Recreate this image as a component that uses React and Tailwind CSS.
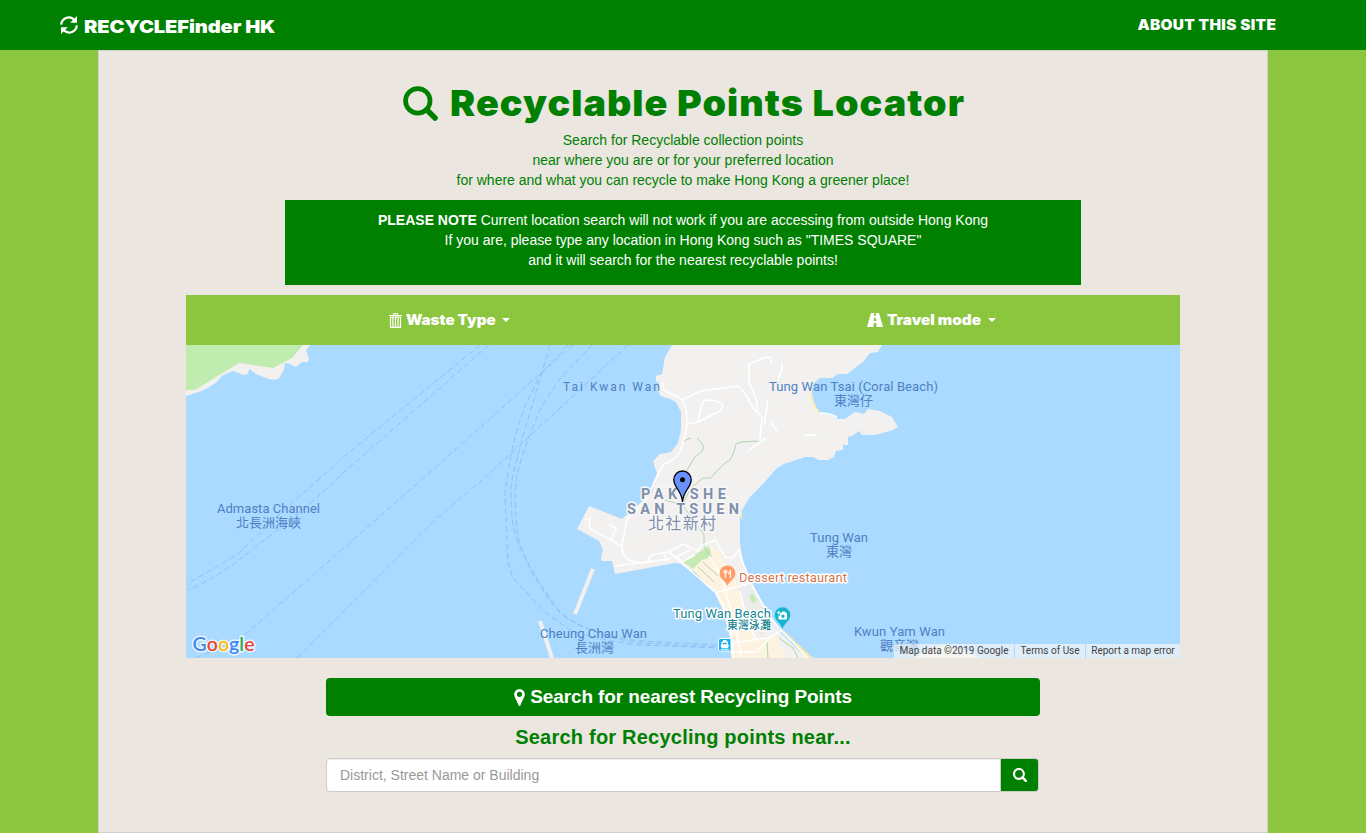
import React from "react";

const ARIAL = "font-['Liberation_Sans',Arial,sans-serif]";
const BLACK = "font-[Inter,'Liberation_Sans',sans-serif] font-black";

function SearchIcon({ className, width = 3.4 }) {
  return (
    <svg viewBox="0 0 26 26" className={className} fill="none" stroke="currentColor">
      <circle cx="11" cy="11" r="9.1" strokeWidth={width} />
      <path d="M17.6 17.6 L23.8 23.8" strokeWidth={width + 0.6} strokeLinecap="round" />
    </svg>
  );
}

function RefreshIcon({ className }) {
  return (
    <svg viewBox="0 0 18 18" className={className} fill="none" stroke="currentColor" strokeWidth="2.3">
      <path d="M1.2 8.6 A7.6 7.6 0 0 1 14 3.6" />
      <path d="M16.8 9.4 A7.6 7.6 0 0 1 4 14.4" />
      <path d="M17 0 V6.8 H10.2 Z" fill="currentColor" stroke="none" />
      <path d="M1 18 V11.2 H7.8 Z" fill="currentColor" stroke="none" />
    </svg>
  );
}

function TrashIcon({ className }) {
  return (
    <svg viewBox="0 0 13 15" className={className} fill="none" stroke="currentColor">
      <path d="M0 2.5 H13 M4.5 2.5 V0.7 H8.5 V2.5" strokeWidth="1.1" />
      <path d="M1.5 4 H11.5 V14.3 H1.5 Z M3.9 4 V14 M6.5 4 V14 M9.1 4 V14" strokeWidth="1.2" />
    </svg>
  );
}

function RoadIcon({ className }) {
  return (
    <svg viewBox="0 0 16 14" className={className} fill="currentColor">
      <path
        fillRule="evenodd"
        d="M4 0 H7.3 L7.1 3 H8.9 L8.7 0 H12 L16 14 H9.6 L9.3 10 H6.7 L6.4 14 H0 Z M7 4.8 L6.8 8 H9.2 L9 4.8 Z"
      />
    </svg>
  );
}

function MarkerIcon({ className }) {
  return (
    <svg viewBox="0 0 11 17" className={className} fill="currentColor">
      <path
        fillRule="evenodd"
        d="M5.5 0 A5.3 5.3 0 0 1 10.8 5.3 C10.8 8.4 7.6 12.5 6.4 16.4 Q5.5 17.4 4.6 16.4 C3.4 12.5 0.2 8.4 0.2 5.3 A5.3 5.3 0 0 1 5.5 0 Z M5.5 2.7 A2.6 2.6 0 1 0 5.5 7.9 A2.6 2.6 0 1 0 5.5 2.7 Z"
      />
    </svg>
  );
}

function Caret() {
  return (
    <svg viewBox="0 0 8 4" className="ml-[6px] h-1 w-2 fill-white">
      <path d="M0 0 H8 L4 4 Z" />
    </svg>
  );
}

const LAND =
  "M672 345 L665 357 662 374 656 376 656 381 659 383 657 390 661 396 670 399 676 402 681 412 681 430 678 443 671 452 660 454 653 461 655 468 657 473 652 493 638 505 622 519 589 506 577 529 599 541 603 550 601 558 602 561 612 561 615 574 675 563 683 564 700 579 715 593 723 610 730 637 731 658 H815 L800 652 780 632 768 614 750 583 743 563 740 543 740 518 742 510 750 497 763 484 777 468 784 464 805 457 813 457 819 460 828 460 834 457 836 451 843 450 843 445 848 445 848 437 852 436 859 431 862 435 875 435 893 430 898 427 892 417 880 411 868 409 864 414 855 412 845 419 838 419 833 416 820 413 813 403 811 392 814 383 820 378 832 378 838 374 847 374 863 362 870 353 878 352 882 345 Z";

const ROUTES = [
  "M480 345 L340 460 325 474 286 508 240 552 Q225 563 188 583",
  "M489 345 L342 474 Q310 505 290 520 L235 563 Q215 578 188 590",
  "M573 345 L530 383 428 474 247 633 Q220 650 194 658",
  "M628 345 L489 474 435 520 297 658",
  "M550 345 L538 386 523 436 513 474 Q509 495 513 525 Q518 555 560 612 Q590 636 640 643 L720 647",
  "M568 345 L541 373 528 400 Q514 430 508 474 L505 493 508 563 513 578 545 612 570 630 Q600 641 640 645 L720 648",
  "M592 345 L560 378 541 408 Q523 450 517 474 Q513 500 518 537 Q530 578 559 612 Q585 634 640 641 L720 645",
];

const ROADS = [
  "M662 382 L664 390 683 400 700 391 738 386 Q747 395 753 408 L762 417 760 440",
  "M683 400 Q689 415 686 430 L681 450 Q678 458 663 465 L655 480 650 493 640 507 627 519 622 545 Q621 553 629 560 L640 563 646 563",
  "M687 424 L698 422 L720 411 Q726 404 717 401 L706 400 Q701 401 698 422",
  "M757 411 L757 401 749 382 749 364 766 357 771 358 771 363",
  "M782 363 L782 369 778 380",
  "M768 400 L764 425 M770 422 L777 431 M766 438 L748 451 M805 435 H817",
  "M820 413 Q829 413 837 417",
  "M585 520 L590 518 589 528 611 540 616 528 609 525 M611 540 L621 546",
  "M615 566 L670 559 M646 563 L651 555 668 552 683 544 697 551 M651 555 L648 563 M664 553 L667 562 M668 552 L682 561",
  "M670 553 L692 572 715 592 Q726 607 730 625 L734 658",
  "M697 551 L702 545 716 540 718 545 726 558 734 557 739 549",
  "M739 549 L743 563 752 585 768 614 778 627 808 658",
  "M709 556 L722 577 728 600 738 640 742 658",
  "M715 593 L725 590 750 583",
  "M740 591 L748 624 758 642 M731 643 L768 638 781 631 M732 652 H757 L768 640",
  "M676 557 L690 550 M682 562 L695 555",
];

const FOOTPATHS = [
  "M683 441 L691 438 M697 438 Q706 445 702 451 L694 458 686 472 M682 505 L691 488 703 478 711 478 Q722 464 730 460 Q735 452 736 444 L741 442 758 441",
  "M665 500 L682 505 690 515 699 528 704 535 704 546 M704 546 L709 556",
  "M693 571 L709 587 M698 567 L714 582 M703 562 L718 576",
  "M779 638 L793 648 798 658 M767 642 L768 658",
];

function MapLabel({ x, y, w, size = 13, fill = "#4f7fc4", weight = 400, children, halo }) {
  return (
    <text
      x={x}
      y={y}
      textLength={w}
      fontSize={size}
      fill={fill}
      fontWeight={weight}
      stroke={halo}
      strokeWidth={halo ? 3 : 0}
      strokeLinejoin="round"
      paintOrder="stroke"
    >
      {children}
    </text>
  );
}

function MapView() {
  return (
    <div className="relative h-[313px] overflow-hidden bg-[#aadaff]">
      <svg viewBox="186 345 994 313" className="block h-[313px] w-full font-[Roboto,'Noto_Sans_CJK_TC',sans-serif]">
        <path
          fill="#f2f1ef"
          d="M186 345 H310 L306 350 309 359 308 362 302 362 296 367 290 364 285 363 284 370 279 378 275 380 269 379 256 374 249 369 248 374 244 375 233 371 Q220 375 217 382 Q205 390 201 391 L186 396 Z"
        />
        <path fill="#c1ecaf" d="M186 345 H303 L292 358 273 368 239 363 195 390 H186 Z" />

        <g fill="none" stroke="#91bff5" strokeWidth="1" strokeDasharray="6 3">
          {ROUTES.map((d) => (
            <path key={d} d={d} />
          ))}
        </g>

        <path d={LAND} fill="#f2f1ef" />
        <path d="M683 562 L709 546 712 557 702 561 693 569 Z" fill="#c5eab3" />
        <path d="M710 546 L717 548 736 580 745 614 757 640 775 636 786 658 H731 L730 637 723 610 715 593 693 569 702 560 712 557 Z" fill="#fdf3e0" />
        <path d="M738 590 L750 584 768 612 778 627 760 635 747 612 Z" fill="#ececea" />
        <path d="M738 590 L748 586 754 594 742 598 Z" fill="#e8edf3" />
        <path d="M749 596 L753 594 757 601 753 603 Z" fill="#c5eab3" />
        <path d="M811 387 Q812 402 820 413 L816 412 Q810 403 809 391 Z" fill="#f9efc1" />
        <path d="M740 515 L742 512 742 520 Z M752 585 L783 631 806 658 H813 L781 628 Z" fill="#f9e9ae" />
        <g fill="none" stroke="#aed6ae" strokeWidth="1">
          {FOOTPATHS.map((d) => (
            <path key={d} d={d} />
          ))}
        </g>
        <g fill="none" stroke="#ffffff" strokeWidth="1.6" strokeLinejoin="round">
          {ROADS.map((d) => (
            <path key={d} d={d} />
          ))}
        </g>
        <path d="M593 569 L575 614 M540 621 L552 658" stroke="#f2f1ef" strokeWidth="4" />
        <path d="M913 658 L936 647 944 645 962 650 980 658 Z" fill="#f5f1e8" />

        <MapLabel x={563} y={391} w={97} size={12}>Tai Kwan Wan</MapLabel>
        <MapLabel x={769} y={391} w={169}>Tung Wan Tsai (Coral Beach)</MapLabel>
        <MapLabel x={834} y={405} w={39}>東灣仔</MapLabel>
        <MapLabel x={217} y={513} w={103}>Admasta Channel</MapLabel>
        <MapLabel x={236} y={527} w={65}>北長洲海峽</MapLabel>
        <MapLabel x={810} y={542} w={58}>Tung Wan</MapLabel>
        <MapLabel x={826} y={556} w={26}>東灣</MapLabel>
        <MapLabel x={540} y={638} w={107}>Cheung Chau Wan</MapLabel>
        <MapLabel x={575} y={652} w={39}>長洲灣</MapLabel>
        <MapLabel x={854} y={636} w={91}>Kwun Yam Wan</MapLabel>
        <MapLabel x={880} y={650} w={39}>觀音灣</MapLabel>
        <MapLabel x={641} y={499} w={85} size={14.5} fill="#7f8fac" weight={700} halo="#f7f7f7">PAK SHE</MapLabel>
        <MapLabel x={627} y={514} w={112} size={14.5} fill="#7f8fac" weight={700} halo="#f7f7f7">SAN TSUEN</MapLabel>
        <MapLabel x={648} y={529} w={68} size={16} fill="#7f8fac" halo="#f7f7f7">北社新村</MapLabel>
        <MapLabel x={739} y={582} w={108} fill="#d2754c" halo="#ffffff">Dessert restaurant</MapLabel>
        <MapLabel x={673} y={618} w={98} fill="#138390" halo="#ffffff">Tung Wan Beach</MapLabel>
        <MapLabel x={727} y={629} w={44} size={11} fill="#138390" weight={500} halo="#ffffff">東灣泳灘</MapLabel>

        <path d="M727.5 586 C726 581 719.5 579 719.5 573.5 A8 8 0 0 1 735.5 573.5 C735.5 579 729 581 727.5 586 Z" fill="#ff9e67" />
        <path d="M724 570 V572 Q724 573.5 725.3 573.5 V578 M725.3 570 V573.5 Q726.8 573.5 726.8 572 V570 M730.4 578 V570 Q728.8 571 728.8 574 H730.4" stroke="#fff" strokeWidth="1" fill="none" />
        <path d="M782.5 629 C781 623 774.7 621 774.7 615 A7.8 7.8 0 0 1 790.3 615 C790.3 621 784 623 782.5 629 Z" fill="#12b5cb" />
        <path fillRule="evenodd" d="M780 613 H781.5 L782.3 611.5 H785 L785.8 613 H787 V619.5 H778.5 V615.5 H780 Z M783 614.5 A1.7 1.7 0 1 0 783 617.9 A1.7 1.7 0 1 0 783 614.5 Z M777 612 H778.2 V610.8 H779.2 V612 H780.4 V613 H779.2 V614.2 H778.2 V613 H777 Z" fill="#fff" />
        <rect x="718.5" y="638.5" width="12.5" height="12.5" rx="1.5" fill="#10b0f2" stroke="#fff" strokeWidth="1" />
        <path fillRule="evenodd" d="M723 640 H726.5 V641.5 H728 V644.5 L729 645 728 648 H721.5 L720.5 645 721.5 644.5 V641.5 H723 Z M722.8 642.8 V644.2 H726.7 V642.8 Z M720.8 648.8 H728.8 V649.7 H720.8 Z" fill="#fff" />

        <path
          d="M682.5 502 C682 491 673.8 487.5 673.8 479.7 A8.7 8.7 0 0 1 691.2 479.7 C691.2 487.5 683 491 682.5 502 Z"
          fill="#6991fd"
          stroke="#000"
          strokeWidth="1.3"
        />
        <circle cx="682.5" cy="479.7" r="2.5" fill="#000" />

        <g transform="translate(192.5 651)" stroke="#ffffff" strokeOpacity="0.75" strokeWidth="3" strokeLinejoin="round" className="font-[Lato,sans-serif]" fontSize="19.5" fontWeight="600">
          <text paintOrder="stroke" textLength="62">
            <tspan fill="#4285f4">G</tspan>
            <tspan fill="#ea4335">o</tspan>
            <tspan fill="#fbbc05">o</tspan>
            <tspan fill="#4285f4">g</tspan>
            <tspan fill="#34a853">l</tspan>
            <tspan fill="#ea4335">e</tspan>
          </text>
        </g>
      </svg>
      <div className="absolute right-0 bottom-0 flex h-[14px] gap-px text-[10px] leading-[14px] whitespace-nowrap text-[#444] font-[Roboto,sans-serif]">
        <span className="w-[120px] bg-[#f5f5f5]/70 text-center">Map data ©2019 Google</span>
        <span className="w-[70px] bg-[#f5f5f5]/70 text-center">Terms of Use</span>
        <span className="w-[94px] bg-[#f5f5f5]/70 text-center">Report a map error</span>
      </div>
    </div>
  );
}

export default function App() {
  return (
    <div className={`flex h-[833px] flex-col overflow-hidden bg-[#8cc63f] text-sm leading-5 text-[#008000] ${ARIAL}`}>
      <nav className={`flex h-[50px] shrink-0 items-center justify-between bg-[#008000] pr-[90px] pl-[60px] whitespace-nowrap text-white ${BLACK}`}>
        <a className="flex items-center text-[18px] tracking-[-0.1px]">
          <RefreshIcon className="mr-[6px] h-[18px] w-[18px]" />
          <span className="mt-[3px] origin-left scale-x-[1.117]">RECYCLEFinder HK</span>
        </a>
        <a className="origin-right scale-x-[1.1] text-[14px] tracking-[0.3px]">ABOUT THIS SITE</a>
      </nav>

      <main className="mx-auto flex w-[1170px] flex-1 flex-col items-center border border-[#d3d0cd] bg-[#ebe6e0]">
        <h1 className={`mt-[29px] flex h-[46px] w-[560px] items-center text-[36px] tracking-[1px] whitespace-nowrap ${BLACK}`}>
          <SearchIcon className="mr-[12px] h-[35px] w-[35px] shrink-0" width={3.5} />
          <span className="origin-left scale-x-[1.048]">Recyclable Points Locator</span>
        </h1>
        <p className="mt-[4px] text-center">
          Search for Recyclable collection points
          <br />
          near where you are or for your preferred location
          <br />
          for where and what you can recycle to make Hong Kong a greener place!
        </p>
        <div className="mt-[10px] h-[85px] w-[796px] bg-[#008000] pt-[10px] text-center text-white">
          <b>PLEASE NOTE</b> Current location search will not work if you are accessing from outside Hong Kong
          <br />
          If you are, please type any location in Hong Kong such as "TIMES SQUARE"
          <br />
          and it will search for the nearest recyclable points!
        </div>

        <section className="mt-[10px] w-[994px]">
          <div className={`flex h-[50px] items-center bg-[#8cc63f] text-[14px] whitespace-nowrap text-white ${BLACK}`}>
            <a className="ml-[203px] flex w-[478px] items-center">
              <TrashIcon className="mr-[4px] h-[15px] w-[13px]" />
              <span className="w-[90px]">
                <span className="inline-block origin-left scale-x-[1.085]">Waste Type</span>
              </span>
              <Caret />
            </a>
            <a className="flex items-center">
              <RoadIcon className="mr-[4px] h-[14px] w-[16px]" />
              <span className="w-[95px]">
                <span className="inline-block origin-left scale-x-[1.09]">Travel mode</span>
              </span>
              <Caret />
            </a>
          </div>
          <MapView />
        </section>

        <button className="mt-[20px] flex h-[38px] w-[714px] items-center justify-center rounded bg-[#008000] text-[19px] font-bold tracking-[-0.1px] text-white">
          <MarkerIcon className="mr-[5px] h-[17px] w-[11px]" />
          Search for nearest Recycling Points
        </button>
        <h2 className="mt-[9px] h-6 text-[20px] leading-6 font-bold tracking-[0.22px]">Search for Recycling points near...</h2>
        <form className="mt-[9px] mr-px flex h-[34px] w-[713px]">
          <input
            className="w-[675px] rounded-l border border-[#ccc] bg-white px-[13px] text-sm shadow-[inset_0_1px_1px_rgba(0,0,0,0.075)] placeholder:text-[#999]"
            placeholder="District, Street Name or Building"
          />
          <button type="button" className="flex w-[38px] items-center justify-center rounded-r border border-l-0 border-[#ccc] bg-[#008000] text-white">
            <SearchIcon className="h-[14px] w-[14px]" width={4} />
          </button>
        </form>
      </main>
    </div>
  );
}
